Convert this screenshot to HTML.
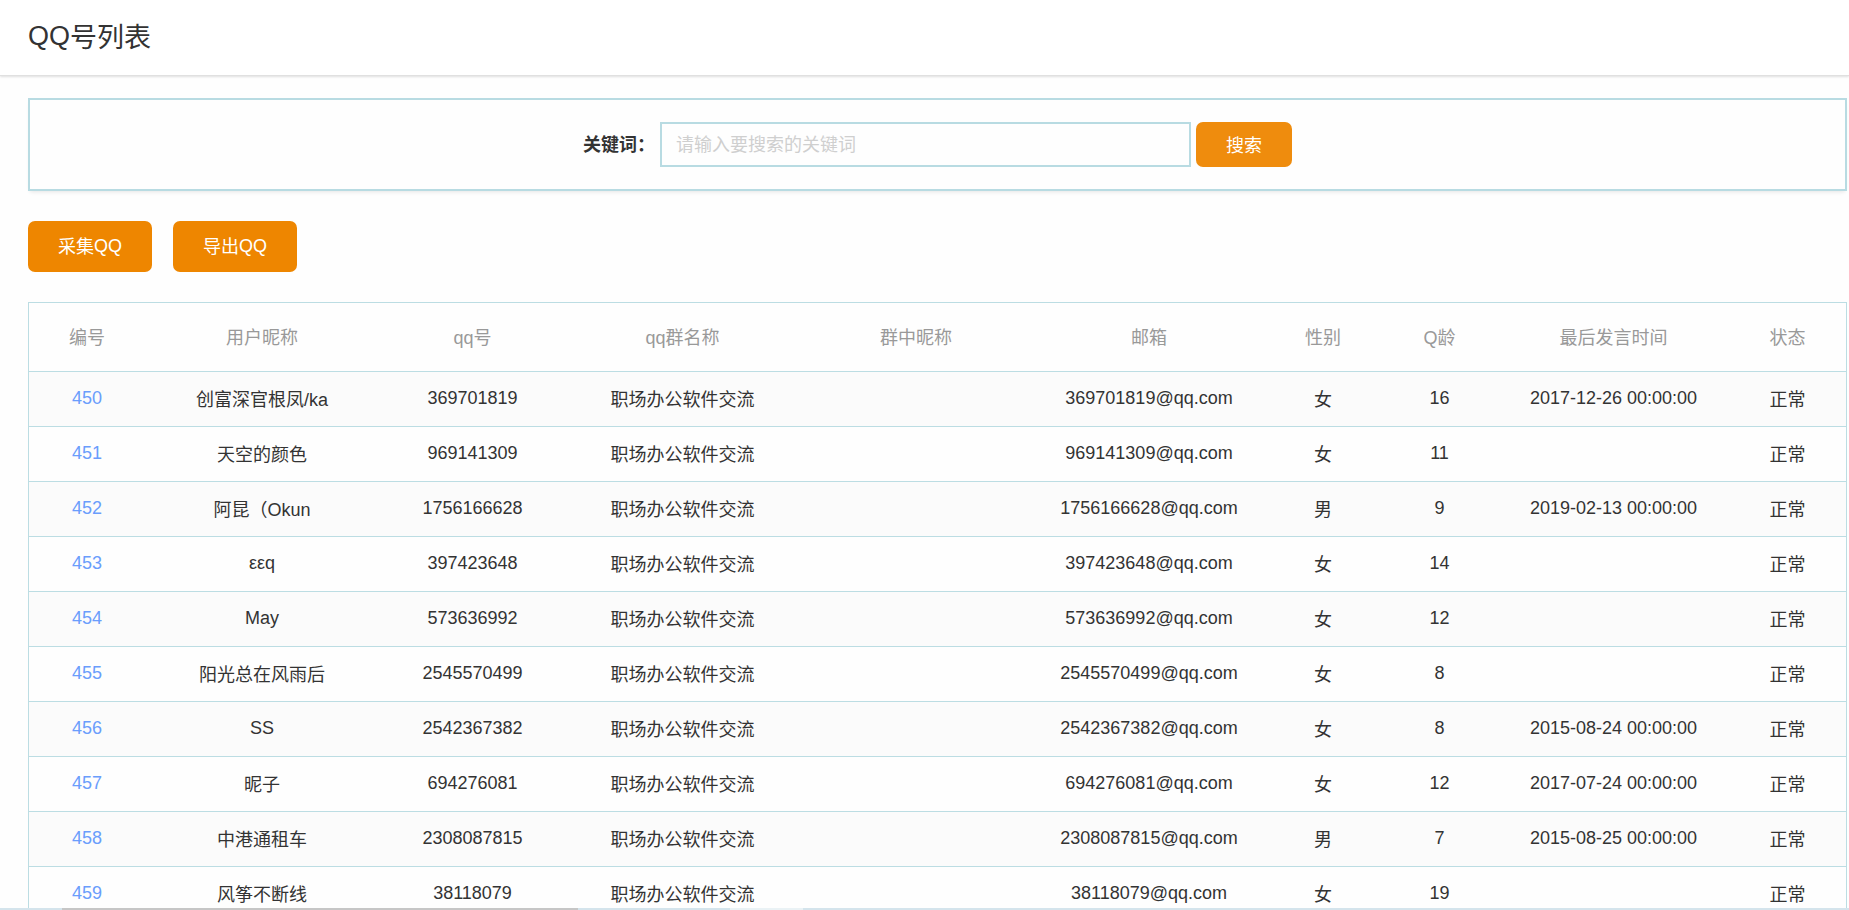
<!DOCTYPE html>
<html lang="zh-CN">
<head>
<meta charset="utf-8">
<title>QQ号列表</title>
<style>
*{box-sizing:border-box;margin:0;padding:0}
html,body{width:1849px;height:910px;overflow:hidden;background:#fefefe}
body{font-family:"Liberation Sans","Noto Sans CJK SC",sans-serif;font-size:18px;color:#333;position:relative}
.hd{position:absolute;left:0;top:0;width:1849px;height:76px;background:#fff;border-bottom:1px solid #e0e0e0;box-shadow:0 1px 2px rgba(0,0,0,.12)}
.hd h1{position:absolute;left:28px;top:16px;font-size:27px;line-height:40px;font-weight:400;color:#333;white-space:nowrap}
.hd h1 .c{top:2px}
.sp{position:absolute;left:28px;top:98px;width:1819px;height:93px;border:2px solid #b8dbe2;background:#fefefe;box-shadow:0 3px 4px -2px rgba(0,0,0,.10)}
.lb{display:block;position:absolute;left:583px;top:123px;height:45px;line-height:45px;font-weight:700;font-size:18px;color:#333;white-space:nowrap}
.in{position:absolute;left:660px;top:122px;width:531px;height:45px;border:2px solid #b8dbe2;background:#fefefe;padding-left:14px;padding-top:1px;line-height:41px;color:#cfcfcf;font-size:18px;white-space:nowrap}
.btn{position:absolute;display:block;border:0;outline:0;margin:0;padding:0;font-family:inherit;background:#ee8600;color:#fff;border-radius:7px;text-align:center;font-size:18px;white-space:nowrap;cursor:pointer}
.btn .c{position:relative;top:1px}
.b0{left:1196px;top:122px;width:96px;height:45px;line-height:45px;background:#ef8c0d}
.b0 .c{top:2px}
.b1{left:28px;top:221px;width:124px;height:51px;line-height:51px}
.b2{left:173px;top:221px;width:124px;height:51px;line-height:51px}
table{position:absolute;left:28px;top:302px;width:1819px;border-collapse:separate;border-spacing:0;table-layout:fixed;border:1px solid #bcdde3;border-bottom:0;background:#fefefe}
th,td{text-align:center;white-space:nowrap;overflow:hidden;border-bottom:1px solid #bcdde3;font-size:18px;font-weight:400;vertical-align:top}
th{height:69px;color:#999;line-height:66px;padding-bottom:2px}
td{height:55px;color:#333;line-height:52px;padding-bottom:2px}
th.z{padding:2px 0 0}
td.z{padding:2px 0 0}
tr.o td{background:#fbfbfb}
td.id a{color:#6a9dfc;text-decoration:none;cursor:pointer}
.c{position:relative}
.sb{position:absolute;left:0;top:908px;width:1849px;height:2px;background:#d4e4ec}
.sb i{position:absolute;left:62px;top:0;width:516px;height:2px;background:#c6c6c6}
.sb b{position:absolute;left:730px;top:0;width:73px;height:2px;background:#eaf2f5}
</style>
</head>
<body>
<div class="hd"><h1>QQ<span class="c">号列表</span></h1></div>
<div class="sp"></div>
<label class="lb"><span class="c">关键词：</span></label>
<div class="in"><span class="c">请输入要搜索的关键词</span></div>
<button type="button" class="btn b0"><span class="c">搜索</span></button>
<button type="button" class="btn b1"><span class="c">采集</span>QQ</button>
<button type="button" class="btn b2"><span class="c">导出</span>QQ</button>
<table>
<colgroup><col style="width:116px"><col style="width:234px"><col style="width:187px"><col style="width:233px"><col style="width:234px"><col style="width:232px"><col style="width:116px"><col style="width:117px"><col style="width:231px"><col style="width:117px"></colgroup>
<thead><tr><th class="z">编号</th><th class="z">用户昵称</th><th class="z">qq号</th><th class="z">qq群名称</th><th class="z">群中昵称</th><th class="z">邮箱</th><th class="z">性别</th><th class="z">Q龄</th><th class="z">最后发言时间</th><th class="z">状态</th></tr></thead>
<tbody>
<tr class="o"><td class="id"><a>450</a></td><td class="z">创富深官根凤/ka</td><td>369701819</td><td class="z">职场办公软件交流</td><td></td><td>369701819@qq.com</td><td class="z">女</td><td>16</td><td>2017-12-26 00:00:00</td><td class="z">正常</td></tr>
<tr><td class="id"><a>451</a></td><td class="z">天空的颜色</td><td>969141309</td><td class="z">职场办公软件交流</td><td></td><td>969141309@qq.com</td><td class="z">女</td><td>11</td><td></td><td class="z">正常</td></tr>
<tr class="o"><td class="id"><a>452</a></td><td class="z">阿昆（Okun</td><td>1756166628</td><td class="z">职场办公软件交流</td><td></td><td>1756166628@qq.com</td><td class="z">男</td><td>9</td><td>2019-02-13 00:00:00</td><td class="z">正常</td></tr>
<tr><td class="id"><a>453</a></td><td>εεq</td><td>397423648</td><td class="z">职场办公软件交流</td><td></td><td>397423648@qq.com</td><td class="z">女</td><td>14</td><td></td><td class="z">正常</td></tr>
<tr class="o"><td class="id"><a>454</a></td><td>May</td><td>573636992</td><td class="z">职场办公软件交流</td><td></td><td>573636992@qq.com</td><td class="z">女</td><td>12</td><td></td><td class="z">正常</td></tr>
<tr><td class="id"><a>455</a></td><td class="z">阳光总在风雨后</td><td>2545570499</td><td class="z">职场办公软件交流</td><td></td><td>2545570499@qq.com</td><td class="z">女</td><td>8</td><td></td><td class="z">正常</td></tr>
<tr class="o"><td class="id"><a>456</a></td><td>SS</td><td>2542367382</td><td class="z">职场办公软件交流</td><td></td><td>2542367382@qq.com</td><td class="z">女</td><td>8</td><td>2015-08-24 00:00:00</td><td class="z">正常</td></tr>
<tr><td class="id"><a>457</a></td><td class="z">昵子</td><td>694276081</td><td class="z">职场办公软件交流</td><td></td><td>694276081@qq.com</td><td class="z">女</td><td>12</td><td>2017-07-24 00:00:00</td><td class="z">正常</td></tr>
<tr class="o"><td class="id"><a>458</a></td><td class="z">中港通租车</td><td>2308087815</td><td class="z">职场办公软件交流</td><td></td><td>2308087815@qq.com</td><td class="z">男</td><td>7</td><td>2015-08-25 00:00:00</td><td class="z">正常</td></tr>
<tr><td class="id"><a>459</a></td><td class="z">风筝不断线</td><td>38118079</td><td class="z">职场办公软件交流</td><td></td><td>38118079@qq.com</td><td class="z">女</td><td>19</td><td></td><td class="z">正常</td></tr>
</tbody></table>
<div class="sb"><i></i><b></b></div>
</body></html>
